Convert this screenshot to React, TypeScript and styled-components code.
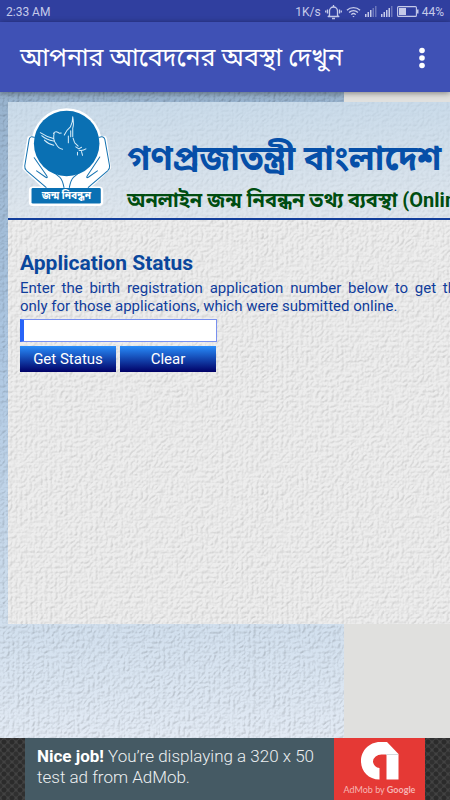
import React from "react";
import styled, { createGlobalStyle } from "styled-components";

const grain = (strength: number, seed: number) =>
  `url("data:image/svg+xml,${encodeURIComponent(
    `<svg xmlns='http://www.w3.org/2000/svg' width='256' height='256'><filter id='g' x='0' y='0' width='100%' height='100%' color-interpolation-filters='sRGB'><feTurbulence type='turbulence' baseFrequency='0.2' numOctaves='3' seed='${seed}' stitchTiles='stitch'/><feColorMatrix values='0 0 0 0 0  0 0 0 0 0  0 0 0 0 0  1 1 0 0 0' result='a'/><feDiffuseLighting in='a' surfaceScale='${strength}' diffuseConstant='1.36' lighting-color='#fff'><feDistantLight azimuth='225' elevation='46'/></feDiffuseLighting></filter><rect width='256' height='256' filter='url(#g)'/></svg>`
  )}")`;

const GlobalStyle = createGlobalStyle`
  * { box-sizing: border-box; }
  body { margin: 0; background: #e0e0de; font-family: Roboto, "Noto Sans Bengali", "Noto Sans", sans-serif; }
`;

const Screen = styled.div`
  display: flex;
  flex-direction: column;
  height: 100vh;
  overflow: hidden;
`;

const StatusBar = styled.div`
  display: flex;
  align-items: center;
  flex: none;
  height: 22px;
  padding: 1px 6px 0;
  background: #303f9f;
  color: #c5cae9;
  font-size: 12px;
  line-height: 22px;
`;

const StatusIcons = styled.div`
  display: flex;
  align-items: center;
  gap: 4px;
  margin-left: auto;
  svg { display: block; }
`;

const BatteryLevel = styled.span`
  display: flex;
  align-items: center;
  gap: 3px;
`;

const Toolbar = styled.header`
  display: flex;
  align-items: center;
  justify-content: space-between;
  flex: none;
  height: 70px;
  padding: 2px 18px 0 20px;
  background: #3f51b5;
  color: #fff;
  box-shadow: 0 1px 6px rgba(0, 0, 0, 0.45);
  z-index: 1;
`;

const Title = styled.h1`
  margin: 0;
  font-size: 25px;
  font-weight: 400;
  line-height: 36px;
  white-space: nowrap;
`;

const MenuButton = styled.button`
  padding: 0;
  border: 0;
  background: none;
  color: #fff;
  svg { display: block; }
`;

const WebPage = styled.main`
  flex: 1;
  min-height: 0;
  padding: 10px 0 0 8px;
  overflow: hidden;
  background: linear-gradient(90deg, transparent 76.4%, #e0e0de 76.4%),
    ${grain(0.2, 4)},
    linear-gradient(#98b3ce, #adc7e2 40%, #cfdeed 80%, #e2eaf4);
  background-blend-mode: normal, multiply, normal;
`;

const Card = styled.section`
  height: 522px;
  overflow: hidden;
  background: ${grain(0.15, 9)}, #ededed;
  background-blend-mode: multiply;
`;

const Banner = styled.div`
  display: flex;
  align-items: flex-start;
  height: 118px;
  padding: 5px 0 0 13px;
  gap: 14px;
  border-bottom: 2px solid #123f9c;
  background: linear-gradient(rgba(178, 207, 232, 0.6), rgba(205, 222, 238, 0.45));
  white-space: nowrap;
  svg { display: block; flex: none; }
`;

const BannerText = styled.div`
  padding-top: 28px;
`;

const Country = styled.h2`
  margin: 0;
  color: #064fa8;
  font-size: 34px;
  line-height: 46px;
`;

const System = styled.p`
  margin: 0;
  color: #004d10;
  font-size: 20px;
  font-weight: 700;
  line-height: 38px;
`;

const Form = styled.form`
  padding: 30px 0 0 12px;
  color: #103d9c;
`;

const Heading = styled.h3`
  margin: 0;
  color: #0a479c;
  font-size: 21px;
  line-height: 26px;
`;

const Hint = styled.label`
  display: block;
  width: calc(100% + 14px);
  margin: 3px 0 4px;
  font-size: 15px;
  line-height: 18px;
  text-align: justify;
`;

const NumberInput = styled.input`
  display: block;
  width: 197px;
  height: 23px;
  margin-bottom: 4px;
  padding: 0 4px;
  border: 1px solid #7890f0;
  border-left: 4px solid #2864f8;
  border-radius: 0;
  background: #fff;
  outline: none;
`;

const Buttons = styled.div`
  display: flex;
  gap: 4px;
`;

const FormButton = styled.button`
  width: 96px;
  height: 26px;
  padding: 0;
  border: 0;
  background: linear-gradient(#288cfa, #000066);
  color: #fff;
  font: 400 15px/26px Roboto, sans-serif;
`;

const AdStrip = styled.footer`
  display: flex;
  justify-content: center;
  flex: none;
  height: 62px;
  padding: 0 25px;
  background: radial-gradient(circle at 4px 4px, #2b2b2b 2px, transparent 3px) 0 0 / 8px 8px,
    radial-gradient(circle at 4px 4px, #303030 2px, transparent 3px) 4px 4px / 8px 8px, #424242;
`;

const AdText = styled.p`
  flex: 1;
  margin: 0;
  padding: 8px 8px 0 12px;
  background: #455a64;
  color: #eceff1;
  font-size: 17px;
  font-weight: 300;
  line-height: 21px;
  b { color: #fff; font-weight: 700; }
`;

const AdLogo = styled.a`
  display: flex;
  flex-direction: column;
  align-items: center;
  width: 91px;
  padding-top: 4px;
  background: #e53935;
  color: #f6b5b3;
  font: 400 9px/20px Lato, sans-serif;
  text-decoration: none;
  white-space: nowrap;
  b { font-weight: 700; }
  svg { display: block; }
`;

const BellIcon = () => (
  <svg width="17" height="16" viewBox="0 0 17 16" fill="none" stroke="#c5cae9" strokeWidth="1.3">
    <path d="M4.500 11.500V7a4 4 0 0 1 8 0v4.500l1.300 1H3.200z" strokeLinejoin="round" />
    <path d="M7 14.500h3M8.500 1v2M2.500 5.500v4M.700 6.500v2M14.500 5.500v4M16.300 6.500v2" />
  </svg>
);

const WifiIcon = () => (
  <svg width="15" height="12" viewBox="0 0 16 12" fill="none" stroke="#c5cae9" strokeWidth="1.4">
    <path d="M1 4.200a10 10 0 0 1 14 0M3.300 6.500a6.700 6.700 0 0 1 9.400 0M5.600 8.800a3.400 3.400 0 0 1 4.800 0" />
    <path d="M6.800 10.200h2.400L8 11.600z" fill="#c5cae9" stroke="none" />
  </svg>
);

const SignalIcon = ({ bars }: { bars: number }) => (
  <svg width="12" height="11" viewBox="0 0 12 11">
    {[0, 1, 2, 3, 4].map((i) => (
      <rect key={i} x={i * 2.5} y={8 - i * 2} width="1.5" height={3 + i * 2} fill={i < bars ? "#c5cae9" : "#6c77bb"} />
    ))}
  </svg>
);

const BatteryIcon = () => (
  <svg width="22" height="11" viewBox="0 0 22 11">
    <rect x=".6" y=".6" width="18.800" height="9.800" rx="1" fill="none" stroke="#c5cae9" strokeWidth="1.100" />
    <rect x="2" y="2" width="7" height="7" fill="#c5cae9" />
    <rect x="20" y="3.500" width="1.500" height="4" fill="#c5cae9" />
  </svg>
);

const BirthLogo = () => (
  <svg width="92" height="100" viewBox="66 36 270 296" role="img" aria-label="জন্ম নিবন্ধন">
    <g fill="#fff" stroke="#fff" strokeWidth="16" strokeLinejoin="round">
      <circle cx="200" cy="144" r="96" />
      <path d="M91 130l-14 86 60 56h126l60-56-12-86z" />
      <rect x="96" y="279" width="204" height="42" rx="4" />
    </g>
    <g fill="none" stroke="#1673b1" strokeWidth="3" strokeLinejoin="round" strokeLinecap="round">
      <path d="M104 126q-12-6-15 6l-13 78q-1 8 5 14l58 50M104 186l36 52q6 10-2 6l-27-19M146 216l34 28q8 8 12 30" />
      <path d="M296 126q14-6 17 6l14 78q1 8-5 14l-58 50M298 184l-36 54q-6 10 2 6l27-19M254 216l-34 28q-8 8-12 30" />
    </g>
    <circle cx="200" cy="144" r="97" fill="#0a70b3" />
    <rect x="96" y="276" width="205" height="46" rx="4" fill="#0a70b3" />
    <g fill="none" stroke="#d9edf8" strokeWidth="3" strokeLinecap="round" strokeLinejoin="round">
      <path d="M122 112q17 12 39 17M126 121q14 12 35 16M134 134q12 12 28 15M161 114q7-10 18 0l5-1M163 114q-5 18 6 32 6 13 19 15" />
      <path d="M193 119q6-14 18-24 7-12 7-30M218 65q4 23 0 34v24M205 122v20M212 106v18M219 128l4 12M224 142l10 10M227 154l9 6 8-5M237 164q11 2 20-4M244 168l3 11M232 170v8" />
    </g>
    <text
      x="199"
      y="309"
      textAnchor="middle"
      fill="#fff"
      fontSize="30"
      fontWeight="700"
      fontFamily="'Noto Sans Bengali', 'Noto Sans', sans-serif"
    >
      জন্ম নিবন্ধন
    </text>
  </svg>
);

const AdMobIcon = () => (
  <svg width="38" height="38" viewBox="0 0 38 38">
    <path d="M19 0h7l11.500 12v25.500h-12v-25H21a8.500 7 0 0 0-9 7 7 7 0 0 0 6.500 6.500v11.500C7 37.500 0 29 0 19S8 0 19 0z" fill="#fff" />
    <path d="M25 12.500h12" stroke="#d5dadd" />
  </svg>
);

export default function App() {
  return (
    <Screen>
      <GlobalStyle />
      <StatusBar>
        <span>2:33 AM</span>
        <StatusIcons>
          <span>1K/s</span>
          <BellIcon />
          <WifiIcon />
          <SignalIcon bars={3} />
          <SignalIcon bars={4} />
          <BatteryLevel>
            <BatteryIcon />
            44%
          </BatteryLevel>
        </StatusIcons>
      </StatusBar>
      <Toolbar>
        <Title>আপনার আবেদনের অবস্থা দেখুন</Title>
        <MenuButton type="button" aria-label="Menu">
          <svg width="20" height="22" viewBox="0 0 20 22" fill="currentColor">
            <circle cx="10" cy="3.500" r="2.800" />
            <circle cx="10" cy="11" r="2.800" />
            <circle cx="10" cy="18.500" r="2.800" />
          </svg>
        </MenuButton>
      </Toolbar>
      <WebPage>
        <Card>
          <Banner>
            <BirthLogo />
            <BannerText>
              <Country>গণপ্রজাতন্ত্রী বাংলাদেশ</Country>
              <System>অনলাইন জন্ম নিবন্ধন তথ্য ব্যবস্থা (Online)</System>
            </BannerText>
          </Banner>
          <Form onSubmit={(event) => event.preventDefault()}>
            <Heading>Application Status</Heading>
            <Hint htmlFor="application-number">
              Enter the birth registration application number below to get the only for those applications, which were
              submitted online.
            </Hint>
            <NumberInput id="application-number" type="text" />
            <Buttons>
              <FormButton type="submit">Get Status</FormButton>
              <FormButton type="reset">Clear</FormButton>
            </Buttons>
          </Form>
        </Card>
      </WebPage>
      <AdStrip>
        <AdText>
          <b>Nice job!</b> You’re displaying a 320 x 50 test ad from AdMob.
        </AdText>
        <AdLogo href="#">
          <AdMobIcon />
          <span>
            AdMob by <b>Google</b>
          </span>
        </AdLogo>
      </AdStrip>
    </Screen>
  );
}
